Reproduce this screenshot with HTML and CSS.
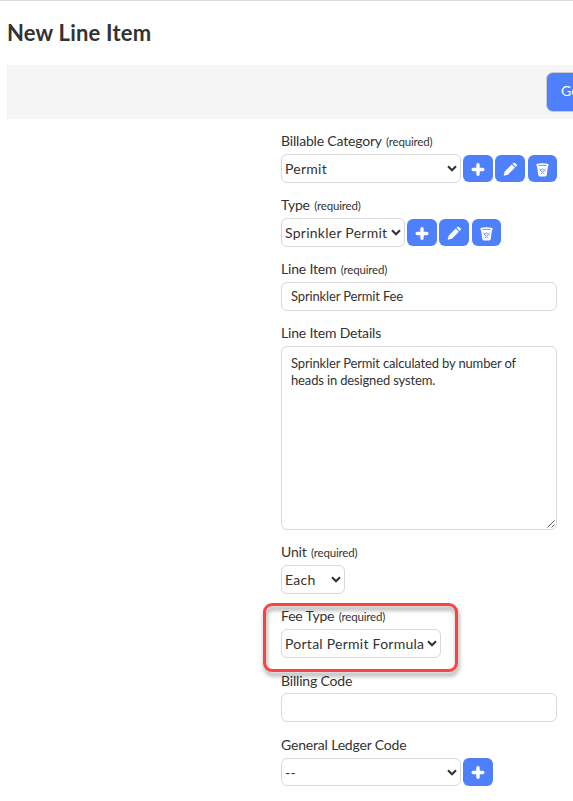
FILE: index.html
```
<!DOCTYPE html>
<html lang="en">
<head>
<meta charset="utf-8">
<title>New Line Item</title>
<link rel="stylesheet" href="styles.css">
</head>
<body>
<svg width="0" height="0" class="defs">
  <symbol id="plus" viewBox="0 0 30 28"><path d="M15 9.7v9.6M10.2 14.5h9.6" stroke="#fff" stroke-width="3.4" stroke-linecap="round"/></symbol>
  <symbol id="pencil" viewBox="0 0 30 28"><path d="M8.7 20.8l1-4.3 7-6.9 3.2 3.2-7 6.9zM17.5 8.8l.8-.8q.9-.6 1.8.1l1.5 1.5q.6.9 0 1.7l-.9.8z" fill="#fff"/></symbol>
  <symbol id="trash" viewBox="0 0 30 28"><path d="M9.5 8.9q6-1.4 12 0v2.4h-.6l-1.1 8.5q-.3 1.6-1.8 1.6h-5q-1.5 0-1.8-1.6l-1.1-8.5h-.6z" fill="#fff"/><path d="M11.2 10.4h8.6M12.2 13.9l1.5 1.2 1.8-1.2 1.8 1.2 1.5-1.2M12.7 16.4l1-.8 1.8 1.2 1.8-1.2 1 .8M13.7 18.8l1.8-1.2 1.8 1.2" fill="none" stroke="#4f80fb" stroke-width=".8"/></symbol>
  <symbol id="chevron" viewBox="0 0 10 7"><path d="M1 1.2l4 4 4-4" fill="none" stroke="#333" stroke-width="2.1"/></symbol>
</svg>
<header class="top"><h1>New Line Item</h1></header>
<div class="toolbar"><button class="go">Generate</button></div>
<main class="form">
  <section class="field">
    <label>Billable Category <small>(required)</small></label>
    <div class="row">
      <div class="select wide"><span>Permit</span><svg><use href="#chevron"/></svg></div>
      <button class="icon"><svg><use href="#plus"/></svg></button>
      <button class="icon"><svg><use href="#pencil"/></svg></button>
      <button class="icon trash"><svg><use href="#trash"/></svg></button>
    </div>
  </section>
  <section class="field">
    <label>Type <small>(required)</small></label>
    <div class="row">
      <div class="select type"><span>Sprinkler Permit</span><svg><use href="#chevron"/></svg></div>
      <button class="icon"><svg><use href="#plus"/></svg></button>
      <button class="icon"><svg><use href="#pencil"/></svg></button>
      <button class="icon trash"><svg><use href="#trash"/></svg></button>
    </div>
  </section>
  <section class="field">
    <label>Line Item <small>(required)</small></label>
    <div class="input">Sprinkler Permit Fee</div>
  </section>
  <section class="field">
    <label>Line Item Details</label>
    <div class="input area">Sprinkler Permit calculated by number of<br>heads in designed system.<svg class="grip" viewBox="0 0 8 8"><path d="M.5 7.5l7-7M4.5 7.5l3-3" stroke="#555" fill="none"/></svg></div>
  </section>
  <section class="field">
    <label>Unit <small>(required)</small></label>
    <div class="select unit"><span>Each</span><svg><use href="#chevron"/></svg></div>
  </section>
  <section class="field marked">
    <label>Fee Type <small>(required)</small></label>
    <div class="select fee"><span>Portal Permit Formula</span><svg><use href="#chevron"/></svg></div>
    <div class="callout"></div>
  </section>
  <section class="field low">
    <label>Billing Code</label>
    <div class="input"></div>
  </section>
  <section class="field low">
    <label>General Ledger Code</label>
    <div class="row">
      <div class="select wide ledger"><span>--</span><svg><use href="#chevron"/></svg></div>
      <button class="icon"><svg><use href="#plus"/></svg></button>
    </div>
  </section>
</main>
</body>
</html>
```
FILE: styles.css
```
* { box-sizing: border-box; }
html { overflow: hidden; }
body {
  margin: 0;
  height: 801px;
  overflow: hidden;
  background: #fff;
  color: #333;
  font-family: Lato, "Liberation Sans", sans-serif;
  font-size: 14px;
}
.defs { position: absolute; }
.top { height: 65px; border-top: 1px solid #ddd; padding: 17px 7px 0; }
h1 { margin: 0; font-size: 22px; line-height: 30px; font-weight: 700; letter-spacing: .2px; white-space: nowrap; }
.toolbar {
  height: 54px;
  margin-left: 7px;
  padding: 7px 0 0 539px;
  background: #f5f5f5;
  overflow: hidden;
}
.go {
  display: block;
  width: 100px;
  height: 40px;
  padding: 0 0 3px 14px;
  border: 1px solid #ccc;
  border-radius: 7px;
  background: #4f80fb;
  color: #fff;
  font: 14px Lato, sans-serif;
  text-align: left;
}
.form { padding-left: 281px; }
label { display: block; height: 35px; padding-top: 12px; line-height: 20px; letter-spacing: -.18px; white-space: nowrap; }
.low label { padding-top: 13px; }
small { font-size: 11.5px; margin-left: 1px; }
.row { display: flex; gap: 2px; }
.select {
  display: flex;
  align-items: center;
  justify-content: space-between;
  height: 29px;
  padding: 0 3px;
  border: 1px solid #d8d8d8;
  border-radius: 6px;
  white-space: nowrap;
  letter-spacing: .26px;
}
.select span { margin-top: -1px; }
.select svg { width: 10px; height: 7px; margin-top: -1px; flex: none; }
.wide { width: 180px; }
.type { width: 124px; }
.unit { width: 64px; }
.fee { width: 160px; }
.ledger { height: 28px; }
.ledger svg { margin-top: 1px; }
.ledger span { margin-top: 0; }
.icon {
  width: 30px;
  height: 27px;
  margin-top: 1px;
  padding: 0;
  border: 0;
  border-radius: 6px;
  background: #4f80fb;
}
.icon svg { display: block; width: 30px; height: 28px; }
.trash { width: 29px; margin-left: 1px; }
.trash svg { margin-left: -1px; }
.ledger + .icon { height: 28px; margin-top: 1px; }
.input {
  position: relative;
  width: 276px;
  height: 29px;
  padding: 5px 9px;
  border: 1px solid #d8d8d8;
  border-radius: 6px;
  font-size: 13px;
  line-height: 17px;
  letter-spacing: -.15px;
  white-space: nowrap;
}
.area { height: 184px; padding-top: 8px; }
.grip { position: absolute; right: 1px; bottom: 1px; width: 8px; height: 8px; }
.marked { position: relative; }
.marked .select { padding-right: 3px; }
.low .ledger { margin-top: 1px; }
.callout {
  position: absolute;
  left: -18px;
  top: 9px;
  width: 195px;
  height: 69px;
  border: 3px solid #fb4345;
  border-radius: 9px;
  filter: drop-shadow(1px 4px 2px rgba(0, 0, 0, .4));
}
```
